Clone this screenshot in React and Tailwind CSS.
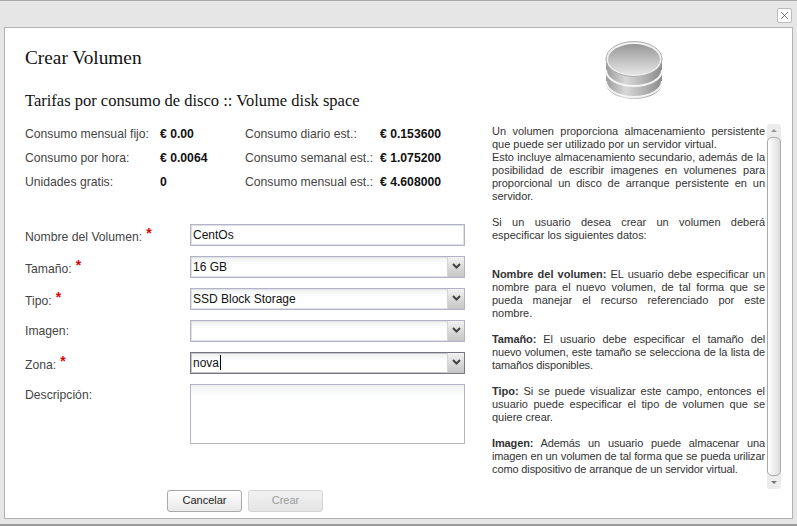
import React from 'react';
import { X } from 'lucide-react';

const rates = [
  ['Consumo mensual fijo:', '€ 0.00', 'Consumo diario est.:', '€ 0.153600'],
  ['Consumo por hora:', '€ 0.0064', 'Consumo semanal est.:', '€ 1.075200'],
  ['Unidades gratis:', '0', 'Consumo mensual est.:', '€ 4.608000'],
];

function DiskIcon() {
  return (
    <svg width="60" height="62" viewBox="0 0 60 62">
      <defs>
        <linearGradient id="side" x1="0" x2="1" y1="0" y2="0">
          <stop offset="0" stopColor="#9a9a9a" />
          <stop offset="0.35" stopColor="#d8d8d8" />
          <stop offset="0.7" stopColor="#b0b0b0" />
          <stop offset="1" stopColor="#8a8a8a" />
        </linearGradient>
        <linearGradient id="top" x1="0" x2="0" y1="0" y2="1">
          <stop offset="0" stopColor="#979797" />
          <stop offset="1" stopColor="#e6e6e6" />
        </linearGradient>
      </defs>
      <path d="M2 19v24c0 9 12.500 16 28 16s28-7 28-16V19z" fill="url(#side)" />
      <path d="M2 30c0 9 12.500 16 28 16s28-7 28-16" fill="none" stroke="#f4f4f4" strokeWidth="2" />
      <path d="M2 41c0 9 12.500 16 28 16s28-7 28-16" fill="none" stroke="#f4f4f4" strokeWidth="2" />
      <ellipse cx="30" cy="19" rx="28" ry="17.500" fill="#f2f2f2" stroke="#ababab" />
      <ellipse cx="30" cy="19.500" rx="26" ry="15.500" fill="url(#top)" />
    </svg>
  );
}

function SelectBox({ value, caret, dark }) {
  return (
    <div className={`flex h-[22px] w-[275px] border ${dark ? 'border-[#77777f] shadow-[inset_0_0_0_1px_#c4c4cc]' : 'border-[#b2b4c6] shadow-[inset_0_0_0_1px_#e0e1e8]'} bg-gradient-to-b from-[#eef1f1] to-white to-40%`}>
      <div className="flex flex-1 items-center pl-[2px] text-[12px] text-[#111]">
        {value}
        {caret && <span className="ml-px h-[15px] w-px bg-black" />}
      </div>
      <div className="flex w-[17px] items-center justify-center border-l border-[#d5d5d5] bg-gradient-to-b from-[#f2f2f2] to-[#c4c4c4] pb-[2px]">
        <svg width="9" height="6" viewBox="0 0 9 6">
          <path d="M1 1l3.500 3.500L8 1" fill="none" stroke="#444" strokeWidth="2" />
        </svg>
      </div>
    </div>
  );
}

function FormRow({ label, required, children }) {
  return (
    <div className="flex">
      <div className={`w-[165px] ${required ? 'pt-[4px]' : 'pt-[2px]'} text-[12.200px] leading-[18px] text-[#444]`}>
        {label}
        {required && <span className="relative -top-[3px] ml-1 text-[14px] font-bold leading-none text-[#e00000]">*</span>}
      </div>
      {children}
    </div>
  );
}

export default function App() {
  return (
    <div className="h-[526px] w-[797px] overflow-hidden bg-[#e6e6e6] font-['Liberation_Sans',sans-serif]">
      <div className="flex h-[524px] flex-col border-t border-[#a8a8a8] border-b-0">
        {/* barra superior */}
        <div className="flex h-[26px] shrink-0 items-center justify-end pr-[5px] pt-[2px]">
          <button className="flex h-[15px] w-[15px] items-center justify-center rounded-[2px] border border-[#bbb] bg-white">
            <X size={13} strokeWidth={1.200} className="text-[#333]" />
          </button>
        </div>

        <div className="ml-[4px] mr-[4px] flex h-[492px] border border-[#b5b0b0] bg-white">
          {/* columna izquierda */}
          <div className="w-[487px] shrink-0 pl-[20px]">
            <h1 className="mt-[19px] font-['Liberation_Serif',serif] text-[19.300px] leading-[22px] text-[#111]">Crear Volumen</h1>
            <h2 className="mt-[23px] font-['Liberation_Serif',serif] text-[16.500px] leading-[18px] text-[#111]">Tarifas por consumo de disco :: Volume disk space</h2>

            <div className="mt-[15px] flex flex-col gap-[6.300px]">
              {rates.map(r => (
                <div key={r[0]} className="flex h-[18px] items-center text-[12.200px] text-[#444]">
                  <span className="w-[135px]">{r[0]}</span>
                  <span className="w-[85px] font-bold text-[#111]">{r[1]}</span>
                  <span className="w-[135px]">{r[2]}</span>
                  <span className="font-bold text-[#111]">{r[3]}</span>
                </div>
              ))}
            </div>

            <div className="mt-[32px] flex flex-col gap-[10px]">
              <FormRow label="Nombre del Volumen:" required>
                <input readOnly value="CentOs" className="h-[22px] w-[275px] border border-[#b2b4c6] pl-[2px] text-[12px] text-[#111] shadow-[inset_0_0_0_1px_#e0e1e8] outline-none" />
              </FormRow>
              <FormRow label="Tamaño:" required><SelectBox value="16 GB" /></FormRow>
              <FormRow label="Tipo:" required><SelectBox value="SSD Block Storage" /></FormRow>
              <FormRow label="Imagen:"><SelectBox value="" /></FormRow>
              <FormRow label="Zona:" required><SelectBox value="nova" caret dark /></FormRow>
              <FormRow label="Descripción:">
                <textarea readOnly className="h-[60px] w-[275px] resize-none border border-[#b2b4c6] bg-gradient-to-b from-[#eef1f1] to-white to-20% outline-none" />
              </FormRow>
            </div>

            <div className="mt-[46px] flex gap-[6px] pl-[142px] text-[11px]">
              <button className="h-[22px] w-[75px] rounded-[3px] border border-[#aaa] bg-gradient-to-b from-white to-[#e8e8e8] text-[#222]">Cancelar</button>
              <button disabled className="h-[22px] w-[75px] rounded-[3px] border border-[#d4d4d4] bg-gradient-to-b from-[#f2f2f2] to-[#e4e4e4] text-[#9a9a9a]">Crear</button>
            </div>
          </div>

          {/* columna derecha */}
          <div className="flex w-[300px] flex-col">
            <div className="ml-[112px] mt-[12px] h-[84px]"><DiskIcon /></div>
            <div className="flex h-[365px]">
              <div className="mt-px w-[273px] overflow-hidden text-justify text-[11px] leading-[13px] tracking-[-0.02px] text-[#333]">
                <p className="mb-[13px]">
                  Un volumen proporciona almacenamiento persistente que puede ser utilizado por un servidor virtual.<br />
                  Esto incluye almacenamiento secundario, además de la posibilidad de escribir imagenes en volumenes para proporcional un disco de arranque persistente en un servidor.
                </p>
                <p className="mb-[26px]">Si un usuario desea crear un volumen deberá especificar los siguientes datos:</p>
                <p className="mb-[13px]"><b>Nombre del volumen:</b> EL usuario debe especificar un nombre para el nuevo volumen, de tal forma que se pueda manejar el recurso referenciado por este nombre.</p>
                <p className="mb-[13px] tracking-[-0.12px]"><b>Tamaño:</b> El usuario debe especificar el tamaño del nuevo volumen, este tamaño se selecciona de la lista de tamaños disponibles.</p>
                <p className="mb-[13px]"><b>Tipo:</b> Si se puede visualizar este campo, entonces el usuario puede especificar el tipo de volumen que se quiere crear.</p>
                <p className="tracking-[-0.12px]"><b>Imagen:</b> Además un usuario puede almacenar una imagen en un volumen de tal forma que se pueda urilizar como dispositivo de arranque de un servidor virtual.</p>
              </div>
              {/* scrollbar */}
              <div className="ml-[2px] flex w-[14px] flex-col rounded-[3px] bg-[#ececec]">
                <div className="flex h-[13px] items-center justify-center">
                  <span className="border-x-[3px] border-b-[3px] border-x-transparent border-b-[#999]" />
                </div>
                <div className="flex-1 rounded-[5px] border border-[#aaa] bg-gradient-to-r from-white to-[#dcdcdc]" />
                <div className="flex h-[13px] items-center justify-center">
                  <span className="border-x-[3px] border-t-[3px] border-x-transparent border-t-[#777]" />
                </div>
              </div>
            </div>
          </div>
        </div>
      </div>
      <div className="h-[2px] bg-[#9a9a9a]" />
    </div>
  );
}
